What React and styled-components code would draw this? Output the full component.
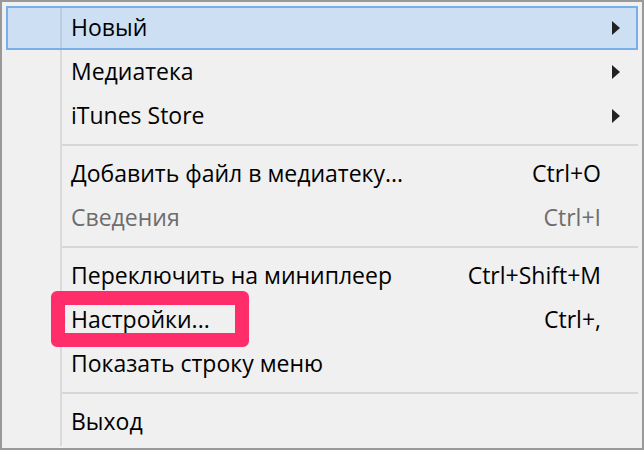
import React from 'react';
import styled, { createGlobalStyle } from 'styled-components';

const items = [
    { label: 'Новый', sub: true, active: true },
    { label: 'Медиатека', sub: true },
    { label: 'iTunes Store', sub: true },
    { sep: true },
    { label: 'Добавить файл в медиатеку...', keys: 'Ctrl+O' },
    { label: 'Сведения', keys: 'Ctrl+I', disabled: true },
    { sep: true },
    { label: 'Переключить на миниплеер', keys: 'Ctrl+Shift+M' },
    { label: 'Настройки...', keys: 'Ctrl+,', marked: true },
    { label: 'Показать строку меню' },
    { sep: true },
    { label: 'Выход' },
];

const Arrow = () => (
    <svg width="8" height="14" viewBox="0 0 8 14">
        <polygon points="0,0 8,7 0,14" fill="#222" />
    </svg>
);

const App = () => (
    <>
        <GlobalStyle />
        <Frame>
            <Menu>
                {items.map((item, i) =>
                    item.sep ? (
                        <Separator key={i} />
                    ) : (
                        <Row key={i} active={item.active} disabled={item.disabled}>
                            <Label>{item.label}</Label>
                            <Keys>{item.keys}</Keys>
                            <ArrowCell>{item.sub && <Arrow />}</ArrowCell>
                            {item.marked && <Mark />}
                        </Row>
                    )
                )}
            </Menu>
        </Frame>
    </>
);

const GlobalStyle = createGlobalStyle`
    body {
        margin: 0;
        font-family: "Open Sans", "Noto Sans", sans-serif;
    }
`;

const Frame = styled.div`
    box-sizing: border-box;
    width: 644px;
    height: 450px;
    border: 2px solid #999;
    background: #f0f0f0;
    padding: 4px;
    overflow: hidden;
`;

const Menu = styled.div`
    display: flex;
    flex-direction: column;
    padding-bottom: 2px;
    background: linear-gradient(
        to right,
        transparent 54px,
        #dadada 54px,
        #dadada 56px,
        transparent 56px
    );
`;

const Row = styled.div`
    position: relative;
    box-sizing: border-box;
    height: 44px;
    display: grid;
    grid-template-columns: 1fr auto 35px;
    align-items: center;
    padding-left: 63px;
    font-size: 23px;
    color: ${p => (p.disabled ? '#6d6d6d' : '#000')};
    border: 2px solid ${p => (p.active ? '#7aaee8' : 'transparent')};
    background: ${p => (p.active ? 'rgba(51, 153, 255, 0.19)' : 'transparent')};
`;

const Label = styled.span`
    white-space: nowrap;
    margin-top: -2px;
`;

const Keys = styled.span`
    white-space: nowrap;
    margin-top: -2px;
`;

const ArrowCell = styled.span`
    display: flex;
    align-items: center;
    padding-left: 11px;
`;

const Separator = styled.div`
    height: 14px;
    margin-left: 56px;
    background: linear-gradient(
        to bottom,
        transparent 6px,
        #d7d7d7 6px,
        #d7d7d7 8px,
        transparent 8px
    );
`;

const Mark = styled.div`
    position: absolute;
    left: 43px;
    top: -9px;
    width: 198px;
    height: 56px;
    box-sizing: border-box;
    border: 14px solid #ff2d6a;
    border-radius: 6px;
`;

export default App;
